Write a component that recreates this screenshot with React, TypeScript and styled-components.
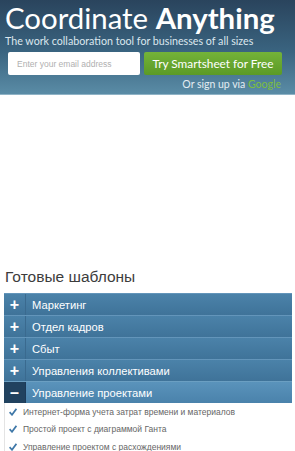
import React from 'react';
import styled, { createGlobalStyle } from 'styled-components';

const GlobalStyle = createGlobalStyle`
  html, body {
    margin: 0;
    padding: 0;
    background: #ffffff;
  }
  * {
    box-sizing: border-box;
  }
`;

const Page = styled.div`
  width: 295px;
  height: 451px;
  overflow: hidden;
  font-family: 'Liberation Sans', Arial, sans-serif;
`;

const Hero = styled.header`
  height: 95px;
  padding: 2px 0 0 5px;
  background: linear-gradient(to bottom, #2a445d 0%, #3a6480 55%, #5a8ca6 100%);
  border-bottom: 1px solid #8fb3c6;
  color: #ffffff;
  font-family: Lato, 'Open Sans', sans-serif;
`;

const Title = styled.h1`
  margin: 0;
  font-size: 29.4px;
  line-height: 31px;
  font-weight: 400;
  white-space: nowrap;

  strong {
    font-weight: 700;
  }
`;

const Tagline = styled.p`
  margin: 1px 0 0 0;
  font-size: 10.7px;
  line-height: 14px;
  color: #dce7ee;
  white-space: nowrap;
`;

const SignupRow = styled.form`
  display: flex;
  gap: 4px;
  margin: 4px 0 0 3px;
`;

const EmailInput = styled.input`
  width: 132px;
  height: 23px;
  padding: 0 9px;
  border: none;
  border-radius: 2px;
  background: #ffffff;
  font-family: 'Liberation Sans', Arial, sans-serif;
  font-size: 8.5px;
  color: #333;

  &::placeholder {
    color: #b0b0b0;
  }
`;

const TryButton = styled.button`
  width: 138px;
  height: 23px;
  border: none;
  border-radius: 2px;
  background: linear-gradient(to bottom, #74b339 0%, #5b9a26 100%);
  color: #ffffff;
  font-family: Lato, sans-serif;
  font-size: 11.8px;
  padding: 0;
`;

const AltSignup = styled.div`
  margin: 3px 14px 0 0;
  text-align: right;
  font-size: 10.5px;
  color: #e4edf2;

  a {
    color: #7cbf3c;
    text-decoration: none;
  }
`;

const Templates = styled.section`
  margin-top: 168px;
  padding: 0 3px 0 4px;
`;

const Heading = styled.h2`
  margin: 0 0 0 1px;
  height: 30px;
  font-family: 'Liberation Sans', Arial, sans-serif;
  font-weight: 400;
  font-size: 15.5px;
  line-height: 28px;
  color: #3c3c3c;
`;

const Accordion = styled.ul`
  list-style: none;
  margin: 0;
  padding: 0;
`;

const Row = styled.li<{ $open?: boolean }>`
  display: flex;
  height: 22px;
  border-top: 1px solid ${p => (p.$open ? '#6b9fc2' : '#6395ba')};
  background: ${p =>
    p.$open
      ? 'linear-gradient(to bottom, #5a93bb 0%, #4a82ab 100%)'
      : 'linear-gradient(to bottom, #4b82a9 0%, #3f7399 100%)'};
  color: #ffffff;
  font-size: 11.2px;
`;

const Toggle = styled.span<{ $open?: boolean }>`
  flex: 0 0 22px;
  display: flex;
  align-items: center;
  justify-content: center;
  border-right: 1px solid ${p => (p.$open ? '#1c3a58' : '#3a6a8f')};
  background: ${p => (p.$open ? '#21425f' : 'transparent')};
  font-weight: 700;
  font-size: 16px;
`;

const Label = styled.span`
  display: flex;
  align-items: center;
  padding-left: 6px;
`;

const Items = styled.ul`
  list-style: none;
  margin: 0;
  padding: 0 0 0 4px;
  border-left: 1px solid #e4e4e4;
`;

const Item = styled.li`
  display: flex;
  align-items: center;
  height: 17.5px;
  gap: 6px;
  font-size: 8.5px;
  color: #666666;
`;

const Check = () => (
  <svg width="8" height="8" viewBox="0 0 8 8">
    <path d="M0.6 4.2 L3 6.8 L7.4 0.8" fill="none" stroke="#3f78a8" strokeWidth="1.7" />
  </svg>
);

const sections = ['Маркетинг', 'Отдел кадров', 'Сбыт', 'Управления коллективами'];
const projects = [
  'Интернет-форма учета затрат времени и материалов',
  'Простой проект с диаграммой Ганта',
  'Управление проектом с расхождениями',
];

export default function App() {
  return (
    <Page>
      <GlobalStyle />
      <Hero>
        <Title>
          Coordinate <strong>Anything</strong>
        </Title>
        <Tagline>The work collaboration tool for businesses of all sizes</Tagline>
        <SignupRow onSubmit={e => e.preventDefault()}>
          <EmailInput placeholder="Enter your email address" />
          <TryButton type="submit">Try Smartsheet for Free</TryButton>
        </SignupRow>
        <AltSignup>
          Or sign up via <a href="#">Google</a>
        </AltSignup>
      </Hero>
      <Templates>
        <Heading>Готовые шаблоны</Heading>
        <Accordion>
          {sections.map(name => (
            <Row key={name}>
              <Toggle>+</Toggle>
              <Label>{name}</Label>
            </Row>
          ))}
          <Row $open>
            <Toggle $open>–</Toggle>
            <Label>Управление проектами</Label>
          </Row>
        </Accordion>
        <Items>
          {projects.map(p => (
            <Item key={p}>
              <Check />
              {p}
            </Item>
          ))}
        </Items>
      </Templates>
    </Page>
  );
}
